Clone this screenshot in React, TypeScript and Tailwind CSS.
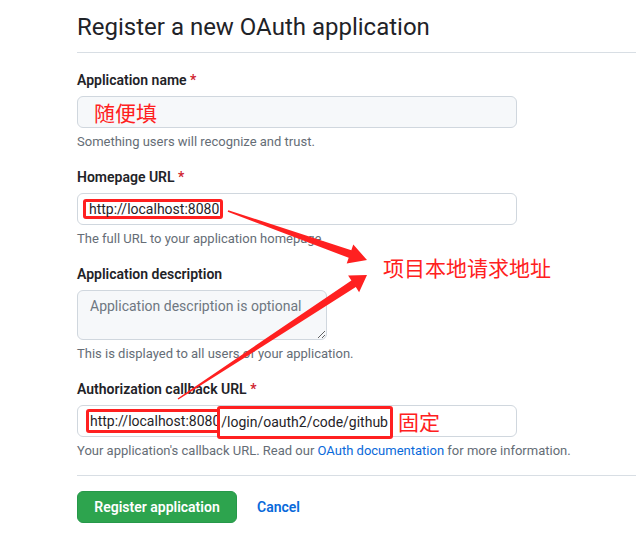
import React from 'react';

const RED = '#ff2020';

function Label({ text, required }: { text: string; required?: boolean }) {
  return (
    <div className="text-[14px] leading-[21px] font-semibold text-[#1f2328]">
      {text}
      {required && <span className="text-[#cf222e]"> *</span>}
    </div>
  );
}

function Note({ children }: { children: React.ReactNode }) {
  return <p className="text-[13px] leading-[18px] text-[#656d76] mt-[5px] whitespace-nowrap">{children}</p>;
}

function Arrows() {
  return (
    <svg className="absolute left-0 top-0 pointer-events-none" width="636" height="546" viewBox="0 0 636 546">
      <polygon
        fill={RED}
        points="228.3,210.2 351.3,250.2 353.3,244.6 367,260 346.7,263.4 348.7,257.8 227.7,211.8"
      />
      <polygon
        fill={RED}
        points="177.6,398.4 351.4,280.5 348.1,275.4 367,275 359.1,292.2 355.8,287.1 178.4,399.6"
      />
    </svg>
  );
}

export default function App() {
  return (
    <div className="relative w-[636px] h-[546px] overflow-hidden bg-white font-['Segoe_UI','Roboto','Noto_Sans_CJK_SC',sans-serif]">
      <div className="pl-[77px]">
        {/* header */}
        <div className="border-b border-[#d8dee4] pt-[9px] pb-[7px]">
          <h1 className="text-[24px] leading-[36px] font-normal text-[#1f2328]">Register a new OAuth application</h1>
        </div>

        {/* form */}
        <div className="w-[440px] pt-[17px]">
          <Label text="Application name" required />
          <div className="mt-[5px] h-[32px] rounded-md border border-[#d0d7de] bg-[#f6f8fa] flex items-center pl-[16px]">
            <span className="text-[21px] leading-none text-[#ff2020] font-['Noto_Sans_CJK_SC',sans-serif]">随便填</span>
          </div>
          <Note>Something users will recognize and trust.</Note>

          <div className="mt-[16px]">
            <Label text="Homepage URL" required />
          </div>
          <div className="mt-[5px] h-[32px] rounded-md border border-[#d0d7de] bg-white flex items-center pl-[5px]">
            <span className="h-[20px] flex items-center border-[3px] border-[#ff2020] rounded-[3px] pl-[3px] pr-[1px] text-[14px] text-[#1f2328]">
              http://localhost:8080
            </span>
          </div>
          <Note>The full URL to your application homepage.</Note>

          <div className="mt-[16px]">
            <Label text="Application description" />
          </div>
          <textarea
            readOnly
            placeholder="Application description is optional"
            className="mt-[5px] block w-[250px] h-[50px] rounded-md border border-[#d0d7de] bg-[#f6f8fa] px-[12px] py-[5px] text-[14px] leading-[20px] placeholder:text-[#6e7781] outline-none"
          />
          <Note>This is displayed to all users of your application.</Note>

          <div className="mt-[16px]">
            <Label text="Authorization callback URL" required />
          </div>
          <div className="mt-[5px] h-[32px] rounded-md border border-[#d0d7de] bg-white flex items-center pl-[8px]">
            <span className="h-[24px] flex items-center border-[3px] border-[#ff2020] rounded-[3px] pl-[1px] text-[14px] text-[#1f2328] whitespace-nowrap">
              http://localhost:8080
            </span>
            <span className="-ml-[6px] h-[33px] mt-[2px] flex items-center border-[3px] border-[#ff2020] rounded-[3px] pl-[1px] pr-[2px] text-[14px] text-[#1f2328] bg-white whitespace-nowrap">
              /login/oauth2/code/github
            </span>
            <span className="ml-[5px] text-[21px] leading-none text-[#ff2020] font-['Noto_Sans_CJK_SC',sans-serif]">固定</span>
          </div>
          <Note>
            Your application's callback URL. Read our <span className="text-[#0969da]">OAuth documentation</span> for more
            information.
          </Note>
        </div>

        <div className="mt-[15px] border-t border-[#d8dee4] pt-[15px] flex items-center">
          <button className="h-[32px] w-[160px] rounded-md bg-[#2da44e] border border-[#26984a] text-white text-[14px] font-semibold">
            Register application
          </button>
          <span className="ml-[20px] text-[14px] font-semibold text-[#0969da]">Cancel</span>
        </div>
      </div>

      {/* annotation text */}
      <div className="absolute left-[383px] top-[253px] text-[21px] leading-[28px] text-[#ff2020] font-['Noto_Sans_CJK_SC',sans-serif]">
        项目本地请求地址
      </div>
      <Arrows />
    </div>
  );
}
